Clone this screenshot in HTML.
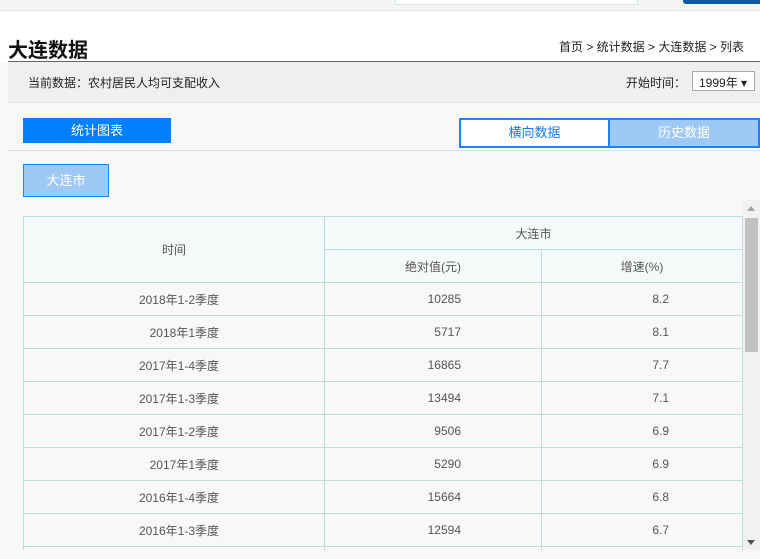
<!DOCTYPE html>
<html><head><meta charset="utf-8"><style>
*{margin:0;padding:0;box-sizing:border-box}
body{width:760px;height:559px;overflow:hidden;background:#f8f8f8;font-family:"Liberation Sans","Noto Sans CJK SC",sans-serif;font-size:12px;color:#333;position:relative}
.a{position:absolute}
td{border:1px solid #bfdcd8;color:#555;font-size:12px;height:33px}
table{border-collapse:collapse;position:absolute;left:23px;top:216px;width:720px;background:#f8f8f8}
.h td{background:#f4f9f9;text-align:center}
.r td{text-align:right}
</style></head><body>
<div class="a" style="left:0;top:0;width:760px;height:11px;background:#f4f4f4;border-bottom:1px solid #e6e6e6"></div>
<div class="a" style="left:395px;top:0;width:243px;height:5px;background:#fff;border:1px solid #d7e6ef;border-top:none"></div>
<div class="a" style="left:683px;top:0;width:77px;height:4px;background:#0d5aa7;border-radius:0 0 0 3px"></div>
<div class="a" style="left:0;top:12px;width:760px;height:50px;background:#fff"></div>
<div class="a" style="left:8px;top:34px;font-size:20px;font-weight:bold;color:#111">大连数据</div>
<div class="a" style="left:559px;top:38px;font-size:12px;color:#222">首页 &gt; 统计数据 &gt; 大连数据 &gt; 列表</div>
<div class="a" style="left:8px;top:61px;width:752px;height:42px;background:#efefef;border-top:1px solid #666;border-bottom:1px solid #e2e2e2"></div>
<div class="a" style="left:28px;top:74px;color:#222">当前数据：农村居民人均可支配收入</div>
<div class="a" style="left:626px;top:74px;color:#222">开始时间：</div>
<div class="a" style="left:692px;top:71px;width:63px;height:20px;background:#fff;border:1px solid #aaa;padding:2px 0 0 6px;color:#222">1999年 ▾</div>
<div class="a" style="left:8px;top:103px;width:752px;height:456px;background:#f8f8f8"></div>
<div class="a" style="left:23px;top:118px;width:148px;height:25px;background:#0080ff;color:#fff;text-align:center;line-height:25px;font-size:13px">统计图表</div>
<div class="a" style="left:459px;top:118px;width:151px;height:30px;background:#fff;border:2px solid #1a85ff;color:#1a7cf0;text-align:center;line-height:26px;font-size:13px">横向数据</div>
<div class="a" style="left:608px;top:118px;width:152px;height:30px;background:#9fc9f5;border:2px solid #1a85ff;color:#fff;text-align:center;line-height:26px;font-size:13px">历史数据</div>
<div class="a" style="left:8px;top:150px;width:752px;height:1px;background:#e2e2e2"></div>
<div class="a" style="left:23px;top:164px;width:86px;height:33px;background:#9fc9f5;border:1px solid #1a85ff;color:#fff;text-align:center;line-height:31px;font-size:13px">大连市</div>
<div class="a" style="left:0;top:200px;width:743px;height:350px;overflow:hidden">
<table style="top:16px">
<tr class="h"><td rowspan="2" style="width:301px">时间</td><td colspan="2">大连市</td></tr>
<tr class="h"><td style="width:217px">绝对值(元)</td><td>增速(%)</td></tr>
<tr class="r"><td style="padding-right:105px;text-align:right">2018年1-2季度</td><td style="padding-right:80px">10285</td><td style="padding-right:73px">8.2</td></tr>
<tr class="r"><td style="padding-right:105px">2018年1季度</td><td style="padding-right:80px">5717</td><td style="padding-right:73px">8.1</td></tr>
<tr class="r"><td style="padding-right:105px">2017年1-4季度</td><td style="padding-right:80px">16865</td><td style="padding-right:73px">7.7</td></tr>
<tr class="r"><td style="padding-right:105px">2017年1-3季度</td><td style="padding-right:80px">13494</td><td style="padding-right:73px">7.1</td></tr>
<tr class="r"><td style="padding-right:105px">2017年1-2季度</td><td style="padding-right:80px">9506</td><td style="padding-right:73px">6.9</td></tr>
<tr class="r"><td style="padding-right:105px">2017年1季度</td><td style="padding-right:80px">5290</td><td style="padding-right:73px">6.9</td></tr>
<tr class="r"><td style="padding-right:105px">2016年1-4季度</td><td style="padding-right:80px">15664</td><td style="padding-right:73px">6.8</td></tr>
<tr class="r"><td style="padding-right:105px">2016年1-3季度</td><td style="padding-right:80px">12594</td><td style="padding-right:73px">6.7</td></tr>
<tr class="r"><td style="padding-right:105px">2016年1-2季度</td><td style="padding-right:80px">8800</td><td style="padding-right:73px">6.6</td></tr>
</table></div>
<div class="a" style="left:743px;top:200px;width:17px;height:350px;background:#f1f1f1"></div>
<div class="a" style="left:747px;top:206px;width:0;height:0;border-left:4px solid transparent;border-right:4px solid transparent;border-bottom:5px solid #a3a3a3"></div>
<div class="a" style="left:745px;top:218px;width:13px;height:134px;background:#c1c1c1"></div>
<div class="a" style="left:747px;top:540px;width:0;height:0;border-left:4px solid transparent;border-right:4px solid transparent;border-top:5px solid #505050"></div>
</body></html>
